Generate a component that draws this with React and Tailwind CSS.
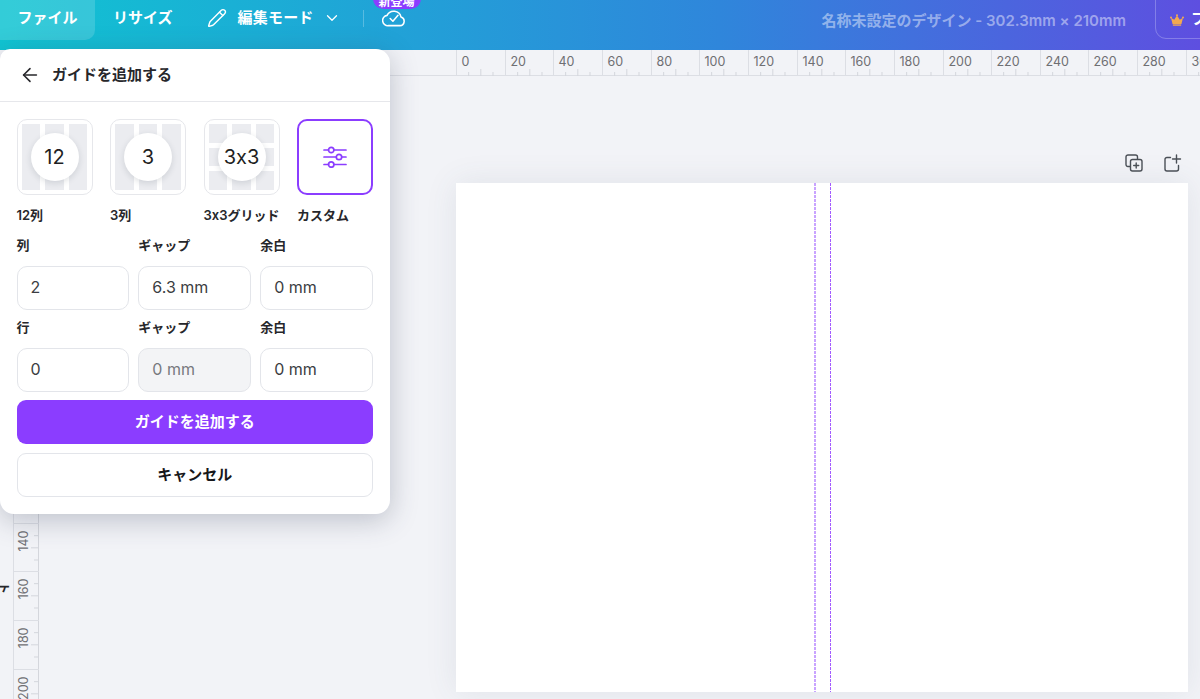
import React from "react";
import { ArrowLeft, ChevronDown, Pencil } from "lucide-react";

const STEP = 48.65;

// top ruler, 0 sits at x=456 of the page
const TopRuler = () => {
    const origin = 417;
    const majors = [];
    for (let i = 0; i < 16; i++) majors.push(i);
    return (
        <svg width="1161" height="26" className="block shrink-0">
            <line x1="0" x2="1161" y1="25.5" y2="25.5" stroke="#dcdee4" />
            {majors.map((i) => {
                const x = Math.round(origin + i * STEP) + 0.5;
                return (
                    <g key={i}>
                        <line x1={x} x2={x} y1="0" y2="26" stroke="#dcdee4" />
                        <line x1={x + STEP / 4} x2={x + STEP / 4} y1="22" y2="26" stroke="#d4d6dc" />
                        <line x1={x + STEP / 2} x2={x + STEP / 2} y1="19" y2="26" stroke="#d4d6dc" />
                        <line x1={x + (STEP * 3) / 4} x2={x + (STEP * 3) / 4} y1="22" y2="26" stroke="#d4d6dc" />
                        <text x={x + 5} y="16" fontSize="12.5" fill="#6f6f73" fontFamily="Inter, sans-serif">{i * 20}</text>
                    </g>
                );
            })}
        </svg>
    );
};

// left ruler, 0 sits at y=182 of the page
const SideRuler = () => {
    const origin = 132;
    const majors = [];
    for (let i = 0; i < 12; i++) majors.push(i);
    return (
        <svg width="26" height="649" className="block shrink-0">
            <line x1="25.5" x2="25.5" y1="0" y2="649" stroke="#d4d6dc" />
            <line x1="0.5" x2="0.5" y1="0" y2="649" stroke="#dcdee4" />
            {majors.map((i) => {
                const y = Math.round(origin + i * STEP) + 0.5;
                return (
                    <g key={i}>
                        <line x1="0" x2="26" y1={y} y2={y} stroke="#dcdee4" />
                        <line x1="21" x2="26" y1={y + STEP / 4} y2={y + STEP / 4} stroke="#d4d6dc" />
                        <line x1="18" x2="26" y1={y + STEP / 2} y2={y + STEP / 2} stroke="#d4d6dc" />
                        <line x1="21" x2="26" y1={y + (STEP * 3) / 4} y2={y + (STEP * 3) / 4} stroke="#d4d6dc" />
                        <text transform={`translate(15 ${y + 7}) rotate(-90)`} textAnchor="end" fontSize="12.5" fill="#6f6f73" fontFamily="Inter, sans-serif">{i * 20}</text>
                    </g>
                );
            })}
        </svg>
    );
};

const CloudCheck = () => (
    <svg width="24" height="20" viewBox="0 0 26 22" fill="none" stroke="white" strokeWidth="1.7" strokeLinecap="round" strokeLinejoin="round">
        <path d="M7 20.5h12.5a4.8 4.8 0 0 0 1.2-9.4A8.2 8.2 0 0 0 5.4 9.2 5.7 5.7 0 0 0 7 20.5z" />
        <path d="M8.8 12.6l3 3 5.6-6.4" />
    </svg>
);

const Crown = () => (
    <svg width="14" height="12" viewBox="0 0 14 12">
        <path d="M2.6 10.2L1 3.8l3.2 2L7 1.4l2.8 4.4 3.2-2-1.6 6.4z" fill="#f2a950" />
        <circle cx="1" cy="3.4" r="1" fill="#f2a950" />
        <circle cx="7" cy="1.2" r="1" fill="#f2a950" />
        <circle cx="13" cy="3.4" r="1" fill="#f2a950" />
        <rect x="2.8" y="10.6" width="8.4" height="1.2" rx=".6" fill="#f2a950" />
    </svg>
);

const SlidersIcon = () => (
    <svg width="24" height="22" viewBox="0 0 24 22" fill="none" stroke="#8b3dff" strokeWidth="1.7" strokeLinecap="round">
        <path d="M1 4h4.5M11 4h12M1 11h12M19 11h4M1 18.500h4.500M11 18.500h12" />
        <circle cx="8.200" cy="4" r="2.700" />
        <circle cx="16" cy="11" r="2.700" />
        <circle cx="8.200" cy="18.500" r="2.700" />
    </svg>
);

const CopyPlus = () => (
    <svg width="18" height="18" viewBox="0 0 18 18" fill="none" stroke="#4b5057" strokeWidth="1.400" strokeLinecap="round" strokeLinejoin="round">
        <path d="M5 12.500H3a2 2 0 0 1-2-2V3a2 2 0 0 1 2-2h7.500a2 2 0 0 1 2 2v2" />
        <rect x="5.500" y="5.500" width="11.500" height="11.500" rx="2" />
        <path d="M11.200 9v5M8.700 11.500h5" />
    </svg>
);

const PagePlus = () => (
    <svg width="18" height="18" viewBox="0 0 18 18" fill="none" stroke="#4b5057" strokeWidth="1.400" strokeLinecap="round" strokeLinejoin="round">
        <path d="M6.500 3.500H3a2 2 0 0 0-2 2V15a2 2 0 0 0 2 2h9.500a2 2 0 0 0 2-2v-3.500" />
        <path d="M12.500 1v8M8.500 5h8" />
    </svg>
);

const Stripes = () => (
    <div className="grid h-full grid-cols-3 gap-[5px]">
        <div className="bg-[#ebecf0]" />
        <div className="bg-[#ebecf0]" />
        <div className="bg-[#ebecf0]" />
    </div>
);

const Cells = () => (
    <div className="grid h-full grid-cols-3 grid-rows-3 gap-[5px]">
        {[0, 1, 2, 3, 4, 5, 6, 7, 8].map((i) => (
            <div key={i} className="bg-[#ebecf0]" />
        ))}
    </div>
);

const Preset = ({ badge, label, grid }) => (
    <div className="w-[76px]">
        <div className="relative h-[76px] rounded-[10px] border border-[#e6e7eb] bg-white p-[4px]">
            {grid ? <Cells /> : <Stripes />}
            <div className="absolute left-1/2 top-1/2 flex h-[48px] w-[48px] -translate-x-1/2 -translate-y-1/2 items-center justify-center rounded-full bg-white text-[20px] text-[#1f1f23] shadow-[0_2px_6px_rgba(30,40,60,0.14)]">
                {badge}
            </div>
        </div>
        <div className="mt-[11px] whitespace-nowrap text-[13px] font-semibold leading-[18px] text-[#27272b]">{label}</div>
    </div>
);

const Field = ({ label, value, disabled }) => (
    <div>
        <div className="mb-[13px] text-[13px] font-semibold leading-[16px] text-[#27272b]">{label}</div>
        <div className={`flex h-[44px] items-center rounded-[10px] border-[1.5px] border-[#e3e5ea] px-[13px] pb-[2px] text-[16px] ${disabled ? "bg-[#f3f4f6] text-[#77797e]" : "bg-white text-[#3b3d42]"}`}>
            {value}
        </div>
    </div>
);

const GuidePanel = () => (
    <div className="absolute left-0 top-[49px] w-[390px] rounded-[14px] rounded-tl-[10px] bg-white shadow-[0_6px_28px_rgba(50,60,85,0.28)]">
        <div className="flex h-[53px] items-center border-b border-[#e6e7eb] pl-[19px]">
            <ArrowLeft size={22} strokeWidth={1.7} color="#27272b" />
            <div className="ml-[11px] text-[15px] font-semibold text-[#27272b]">ガイドを追加する</div>
        </div>
        <div className="pb-[17px] pl-[16.5px] pr-[17px] pt-[17px]">
            <div className="flex justify-between">
                <Preset badge="12" label="12列" />
                <Preset badge="3" label="3列" />
                <Preset badge="3x3" label="3x3グリッド" grid />
                <div className="w-[76px]">
                    <div className="flex h-[76px] items-center justify-center rounded-[10px] border-2 border-[#8b3dff] bg-white">
                        <SlidersIcon />
                    </div>
                    <div className="mt-[11px] text-[13px] font-semibold leading-[18px] text-[#27272b]">カスタム</div>
                </div>
            </div>
            <div className="mt-[13px] grid grid-cols-3 gap-x-[9px] gap-y-[9px]">
                <Field label="列" value="2" />
                <Field label="ギャップ" value="6.3 mm" />
                <Field label="余白" value="0 mm" />
                <Field label="行" value="0" />
                <Field label="ギャップ" value="0 mm" disabled />
                <Field label="余白" value="0 mm" />
            </div>
            <button className="mt-[8px] flex h-[44px] w-full items-center justify-center rounded-[9px] bg-[#8b3dff] text-[15px] font-semibold text-white">
                ガイドを追加する
            </button>
            <button className="mt-[9px] flex h-[44px] w-full items-center justify-center rounded-[9px] border-[1.5px] border-[#e3e5ea] bg-white text-[15px] font-semibold text-[#17171a]">
                キャンセル
            </button>
        </div>
    </div>
);

const Header = () => (
    <div className="flex h-[50px] shrink-0 items-start overflow-hidden bg-[linear-gradient(90deg,#10c4d2_0%,#2f86db_60%,#5e4fe0_100%)] text-[15px] font-semibold text-white">
        <div className="flex h-[40px] w-[95px] items-center justify-center rounded-br-[10px] bg-white/15 pb-[4px]">ファイル</div>
        <div className="ml-[18px] flex h-[40px] items-center pb-[4px]">リサイズ</div>
        <div className="ml-[34px] flex h-[40px] items-center pb-[4px]">
            <Pencil size={20} strokeWidth={1.7} />
            <span className="ml-[11px] tracking-[0.2px]">編集モード</span>
            <ChevronDown size={18} strokeWidth={1.7} className="ml-[9px]" />
        </div>
        <div className="ml-[22px] mt-[10px] h-[17px] w-px bg-white/25" />
        <div className="relative ml-[18px] mt-[7px]">
            <CloudCheck />
            <div className="absolute left-[-9px] top-[-19px] flex h-[21px] w-[48px] items-end justify-center rounded-full bg-[#8b3dff] text-[12px] leading-[15px]">新登場</div>
        </div>
        <div className="ml-auto mt-[10px] text-[15px] font-semibold text-white/45">名称未設定のデザイン - 302.3mm × 210mm</div>
        <div className="ml-[29px] mr-[-30px] mt-[-12px] flex h-[51px] w-[75px] shrink-0 items-center rounded-[11px] border border-white/25 pl-[14px] pt-[12px]">
            <Crown />
            <span className="ml-[7px]">フ</span>
        </div>
    </div>
);

const App = () => (
    <div className="relative flex h-[699px] w-full flex-col overflow-hidden bg-[#f2f3f7] font-['Inter','Noto_Sans_CJK_JP',sans-serif] [font-feature-settings:'calt'_0]">
        <Header />
        <div className="flex min-h-0 flex-1">
            <div className="w-[13px] shrink-0" />
            <SideRuler />
            <div className="min-w-0 flex-1">
                <TopRuler />
                <div className="pl-[417px] pt-[78px]">
                    <div className="w-[732px]">
                        <div className="mb-[10px] flex h-[19px] justify-end gap-[21px] pr-[6px]">
                            <CopyPlus />
                            <PagePlus />
                        </div>
                        <div className="relative h-[509px] bg-white shadow-[0_0_30px_rgba(64,87,109,0.1)]">
                            <div className="absolute bottom-0 left-[358px] top-0 w-[2px] bg-[repeating-linear-gradient(to_bottom,#c9a4ff_0,#c9a4ff_3px,transparent_3px,transparent_4px)]" />
                            <div className="absolute bottom-0 left-[374px] top-0 w-px bg-[repeating-linear-gradient(to_bottom,#a35cff_0,#a35cff_3px,transparent_3px,transparent_4px)]" />
                        </div>
                    </div>
                </div>
            </div>
        </div>
        <div className="absolute left-[-3px] top-[579px] rotate-90 text-[12px] font-semibold text-[#27272b]">ト</div>
        <GuidePanel />
    </div>
);

export default App;
